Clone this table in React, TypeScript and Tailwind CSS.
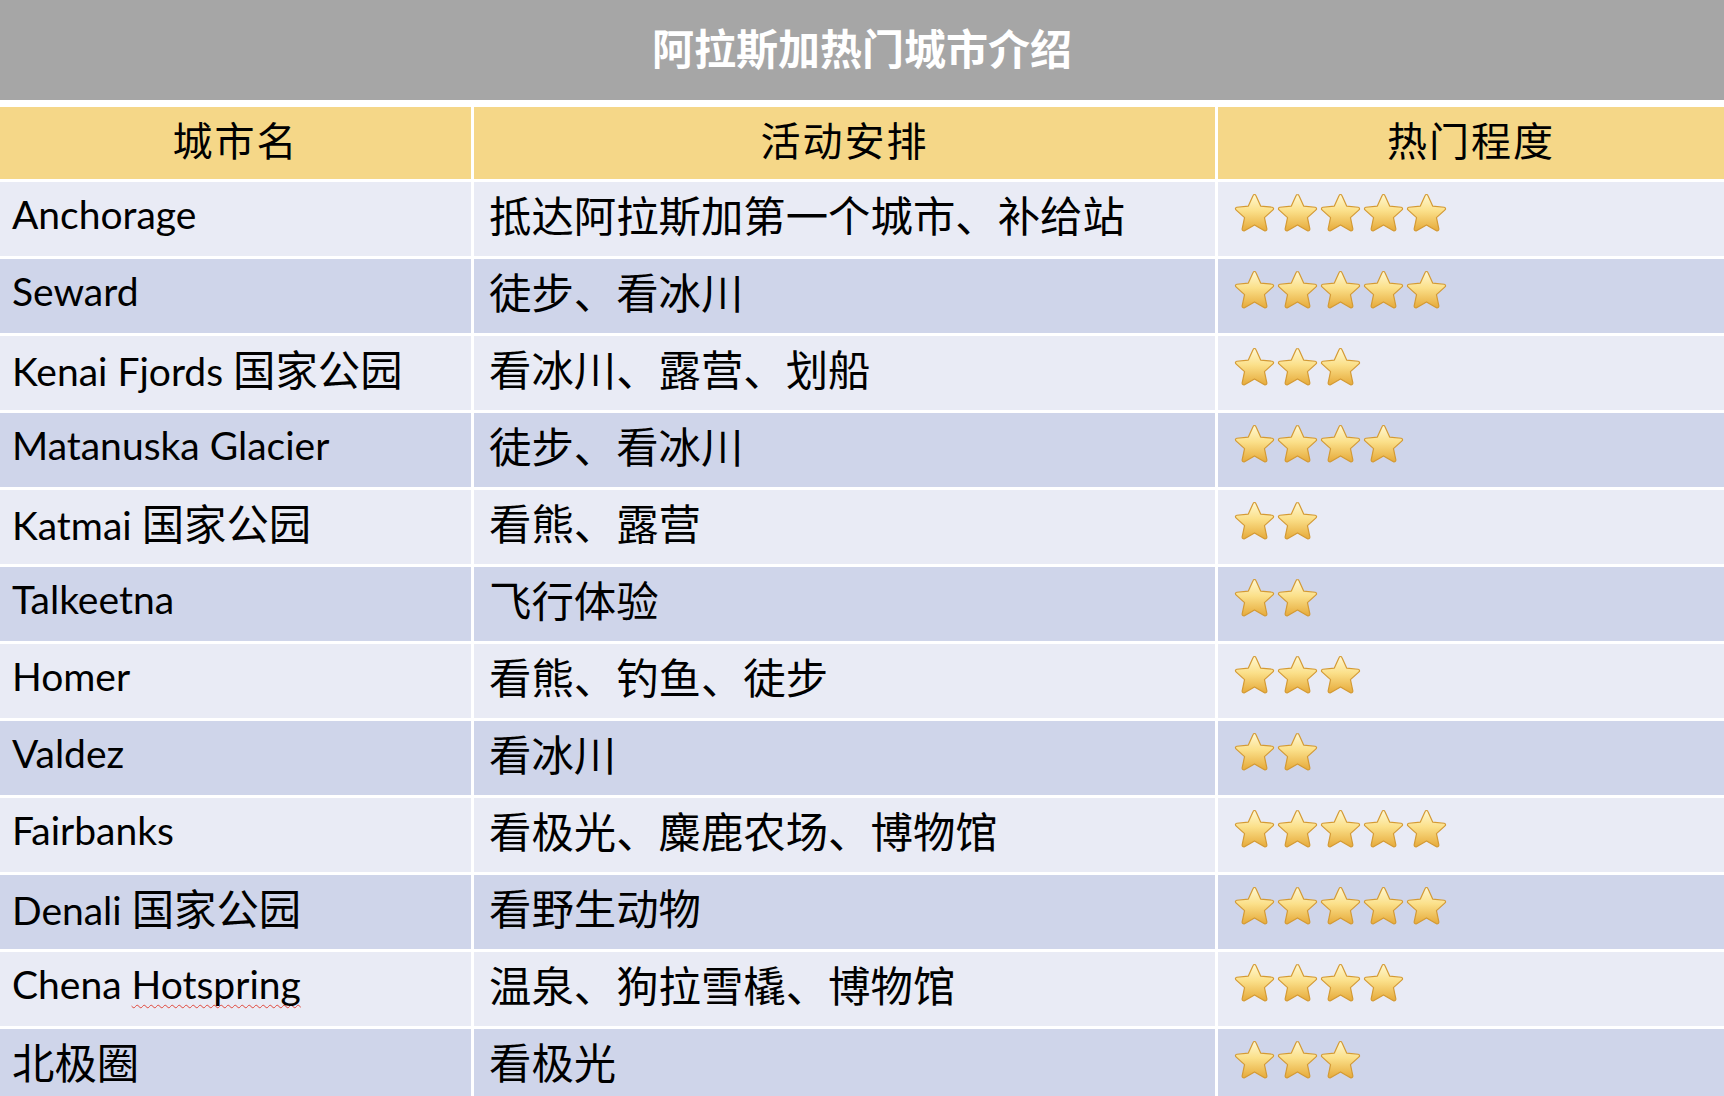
import React from "react";

type Row = {
  city: string;
  activity: string;
  stars: number;
};

const rows: Row[] = [
  { city: "Anchorage", activity: "抵达阿拉斯加第一个城市、补给站", stars: 5 },
  { city: "Seward", activity: "徒步、看冰川", stars: 5 },
  { city: "Kenai Fjords 国家公园", activity: "看冰川、露营、划船", stars: 3 },
  { city: "Matanuska Glacier", activity: "徒步、看冰川", stars: 4 },
  { city: "Katmai 国家公园", activity: "看熊、露营", stars: 2 },
  { city: "Talkeetna", activity: "飞行体验", stars: 2 },
  { city: "Homer", activity: "看熊、钓鱼、徒步", stars: 3 },
  { city: "Valdez", activity: "看冰川", stars: 2 },
  { city: "Fairbanks", activity: "看极光、麋鹿农场、博物馆", stars: 5 },
  { city: "Denali 国家公园", activity: "看野生动物", stars: 5 },
  { city: "Chena Hotspring", activity: "温泉、狗拉雪橇、博物馆", stars: 4 },
  { city: "北极圈", activity: "看极光", stars: 3 },
];

const FONT = "font-['Lato','Noto_Sans_CJK_SC',sans-serif]";
const CJK = /[\u3000-\u9fff\uff00-\uffef]/;

// CJK runs get a larger size so they line up with the Latin text
function MixedText({ text }: { text: string }) {
  const parts = text.split(/([\u3000-\u9fff\uff00-\uffef]+)/).filter(Boolean);
  return (
    <span className="leading-none">
      {parts.map((p, i) => {
        if (CJK.test(p)) {
          return (
            <span key={i} className="font-['Noto_Sans_CJK_SC',sans-serif] text-[42.4px]">
              {p}
            </span>
          );
        }
        if (p.includes("Hotspring")) {
          const [before] = p.split("Hotspring");
          return (
            <span key={i}>
              {before}
              <span className="underline decoration-wavy decoration-[#e0463a] decoration-1 underline-offset-[5px] [text-decoration-skip-ink:none]">
                Hotspring
              </span>
            </span>
          );
        }
        return <span key={i}>{p}</span>;
      })}
    </span>
  );
}

function Star() {
  return (
    <svg viewBox="1.2 1.6 21.6 21.6" className="h-[44px] w-[43px] shrink-0">
      <path
        d="M12 2.6c.3 0 .6.2.7.5l2.4 5.3 5.8.6c.7.1.9.9.4 1.3l-4.3 3.9 1.2 5.7c.1.7-.6 1.2-1.2.9L12 17.9l-5 2.9c-.6.3-1.3-.2-1.2-.9L7 14.2 2.7 10.3c-.5-.4-.3-1.2.4-1.3l5.8-.6 2.4-5.3c.1-.3.4-.5.7-.5z"
        fill="url(#starGrad)"
        stroke="#d49a34"
        strokeWidth="0.6"
        strokeLinejoin="round"
      />
    </svg>
  );
}

function Stars({ count }: { count: number }) {
  return (
    <div className="flex items-center -mt-[10px]">
      {Array.from({ length: count }).map((_, i) => (
        <Star key={i} />
      ))}
    </div>
  );
}

export default function App() {
  return (
    <div className={`h-screen w-full overflow-hidden bg-white ${FONT}`}>
      {/* shared gradient for the stars */}
      <svg width="0" height="0" className="absolute">
        <defs>
          <linearGradient id="starGrad" x1="0" y1="0" x2="0" y2="1">
            <stop offset="0%" stopColor="#fff8d2" />
            <stop offset="45%" stopColor="#fbe08a" />
            <stop offset="100%" stopColor="#e6aa3a" />
          </linearGradient>
        </defs>
      </svg>

      {/* Title */}
      <div className="flex h-[100px] items-center justify-center bg-[#a6a6a6] pb-[6px]">
        <h1 className="font-['Noto_Sans_CJK_SC',sans-serif] text-[42px] font-bold leading-none text-white">
          阿拉斯加热门城市介绍
        </h1>
      </div>

      {/* Table */}
      <div className="mt-[7px] grid grid-cols-[471px_741px_1fr] gap-[3px]">
        {/* Header */}
        {["城市名", "活动安排", "热门程度"].map((h) => (
          <div
            key={h}
            className="flex h-[72px] items-center justify-center bg-[#f5d788] pb-[8px] font-['Noto_Sans_CJK_SC',sans-serif] text-[40px] leading-none tracking-[2px] text-black"
          >
            {h}
          </div>
        ))}

        {rows.map((row, idx) => {
          const bg = idx % 2 === 0 ? "bg-[#e9ebf5]" : "bg-[#cfd5ea]";
          return (
            <React.Fragment key={row.city}>
              <div className={`flex h-[74px] items-center whitespace-nowrap pb-[9px] pl-[12px] text-[39px] text-black ${bg}`}>
                <MixedText text={row.city} />
              </div>
              <div className={`flex h-[74px] items-center whitespace-nowrap pb-[9px] pl-[15px] text-[39px] text-black ${bg}`}>
                <MixedText text={row.activity} />
              </div>
              <div className={`flex h-[74px] items-center pl-[15px] ${bg}`}>
                <Stars count={row.stars} />
              </div>
            </React.Fragment>
          );
        })}
      </div>
    </div>
  );
}
